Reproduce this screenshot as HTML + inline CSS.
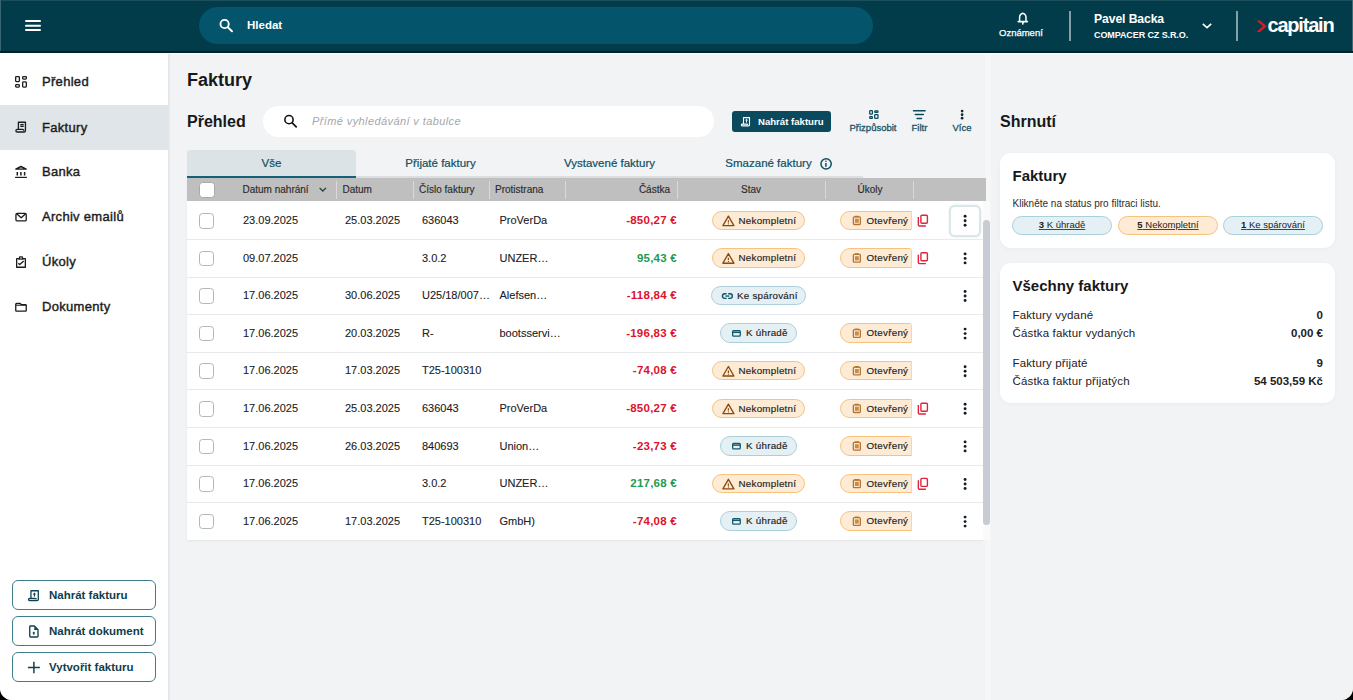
<!DOCTYPE html>
<html lang="cs">
<head>
<meta charset="utf-8">
<title>Faktury</title>
<style>
*{box-sizing:border-box;margin:0;padding:0}
html,body{width:1353px;height:700px;overflow:hidden;background:#000}
body{font-family:"Liberation Sans",sans-serif;color:#1b1c1e;position:relative}
.app{position:absolute;left:0;top:0;width:1353px;height:700px;background:#f2f3f5;border-radius:0 0 12px 12px;overflow:hidden}
.abs{position:absolute}
/* header */
.hdr{position:absolute;z-index:2;left:0;top:0;width:1353px;height:53px;background:#023c4b;border-bottom:2px solid #01202a}
.wstrip{position:absolute;z-index:2;left:0;top:53px;width:1353px;height:1.4px;background:#fff}
.hdr .topline{position:absolute;left:0;top:0;width:1353px;height:1px;background:#1d4e5c}
.ham{position:absolute;left:25px;width:16px;height:2px;background:#fff;border-radius:1px}
.gsearch{position:absolute;left:199px;top:7px;width:674px;height:37px;border-radius:19px;background:#04556b}
.gsearch .txt{position:absolute;left:48px;top:11px;font-size:11.5px;font-weight:bold;color:#fff;line-height:14px}
.notif{position:absolute;left:999px;top:27.5px;font-size:9.5px;color:#fff;line-height:10px;-webkit-text-stroke:0.25px #fff}
.vdiv{position:absolute;top:10.5px;width:2px;height:30px;background:#84a0a7}
.uname{position:absolute;left:1094px;top:12px;font-size:12.2px;font-weight:bold;color:#fff;line-height:15px;letter-spacing:-0.1px}
.ucomp{position:absolute;left:1094px;top:29.7px;font-size:9px;font-weight:bold;color:#fff;line-height:11px;letter-spacing:-0.1px}
.logo{position:absolute;left:1267.5px;top:13px;font-size:20px;font-weight:bold;color:#fff;letter-spacing:-1.2px;line-height:24px}
/* sidebar */
.side{position:absolute;left:0;top:52px;width:170px;height:648px;background:#fff;border-right:2px solid #e6e7ea}
.nav{position:absolute;left:0;width:168px;height:45px}
.nav.active{background:#dfe5e8}
.nav .ic{position:absolute;left:14px;top:16px;width:14px;height:14px}
.nav .lb{position:absolute;left:42px;top:15px;font-size:13px;line-height:15px;color:#1b1c1e;-webkit-text-stroke:0.4px #1b1c1e;letter-spacing:0.3px}
.sbtn{position:absolute;left:12px;width:144px;height:30px;border:1.5px solid #3f7d8c;border-radius:6px;background:#fff}
.sbtn .ic{position:absolute;left:15px;top:7px}
.sbtn .lb{position:absolute;left:36px;top:7px;font-size:11.5px;font-weight:bold;color:#0f3e4c;line-height:14px}
/* main */
.h1{position:absolute;left:187px;top:70px;font-size:18px;font-weight:bold;line-height:20px;color:#17181a}
.h2{position:absolute;left:187px;top:113px;font-size:16px;font-weight:bold;line-height:18px;color:#17181a}
.tsearch{position:absolute;left:263px;top:106px;width:451px;height:31px;border-radius:16px;background:#fff}
.tsearch .ph{position:absolute;left:49px;top:9px;font-size:11px;font-style:italic;color:#a4a7ab;line-height:13px;letter-spacing:0.4px}
.upbtn{position:absolute;left:732px;top:111px;width:99px;height:21px;border-radius:3px;background:#0b4a5c}
.upbtn .lb{position:absolute;left:26px;top:5px;font-size:9.6px;font-weight:bold;color:#fff;line-height:12px}
.tool{position:absolute;top:122px;font-size:9.5px;color:#165565;line-height:11px;-webkit-text-stroke:0.3px #165565}
.tab{position:absolute;top:150px;width:169px;height:28px;text-align:center;font-size:11.5px;line-height:13px;color:#0e5063;padding-top:7px;-webkit-text-stroke:0.2px #0e5063}
.tab.active{background:#dce3e6;border-radius:4px 4px 0 0;border-bottom:2px solid #16607a}
.tabline{position:absolute;left:187px;top:176px;width:676px;height:2px;background:#dcdfe2}
.table{position:absolute;left:187px;top:178px;width:796px;height:361.5px;background:#fff;box-shadow:0 1px 2px rgba(0,0,0,0.06)}
.thead{position:absolute;left:187px;top:178px;width:799px;height:23px;background:#bfbfbf}
.track{position:absolute;left:983px;top:201px;width:7px;height:338.5px;background:#fafafb}
.th{position:absolute;top:184px;font-size:10px;line-height:12px;color:#2a2b2d;-webkit-text-stroke:0.15px #2a2b2d}
.thd{position:absolute;top:181px;width:1px;height:18px;background:#d9d9d9}
.row{position:absolute;left:0;width:983px;height:37.6px}
.row.sep::after{content:"";position:absolute;left:187px;right:0;top:38px;height:1px;background:#e8eaec}
.row .t{position:absolute;top:13px;font-size:11px;line-height:13px;color:#202124;-webkit-text-stroke:0.1px #202124}
.cb{position:absolute;top:12px;width:15.5px;height:15.5px;border:1.5px solid #abb8bc;border-radius:3.5px;background:#fff}
.amt{position:absolute;right:306px;top:13px;font-size:11.5px;font-weight:bold;line-height:13px;letter-spacing:0.25px}
.amt.red{color:#e1112b}
.amt.green{color:#1f9a4e}
.pill{position:absolute;top:9.5px;height:19.5px;border-radius:10px;border:1px solid}
.pt{position:absolute;top:13.5px;font-size:9.8px;letter-spacing:0.25px;line-height:12px;color:#222;white-space:nowrap;-webkit-text-stroke:0.15px #222}
.pill.orange{background:#fdebd5;border-color:#f6c37f}
.pill.blue{background:#e5f0f4;border-color:#aad0dc}
.ukclip{position:absolute;left:838px;top:9px;width:74px;height:21px;overflow:hidden;border-radius:0 3px 3px 0}
.ukclip::after{content:"";position:absolute;right:0;top:1px;bottom:1px;width:1px;background:#f7d6ad}
.pill.uk{left:2px;top:0.5px;width:90px}
.copy{position:absolute;left:917px;top:12px;width:13px;height:15px}
.kebbtn{position:absolute;left:949px;top:3.5px;width:32px;height:32.5px;border:2px solid #d9e7e9;border-radius:6px;background:#fff;box-shadow:0 0 1.5px rgba(140,170,175,0.45)}
.keb{position:absolute;left:963.5px;top:13px;width:3px;height:12px}
.keb i{display:block;width:3px;height:3px;border-radius:50%;background:#0e1e26;margin-bottom:1.5px}
.sbar{position:absolute;left:983px;top:219.5px;width:6.5px;height:305px;border-radius:3.5px;background:#c8cbd3}
/* right panel */
.rpanel{position:absolute;left:991px;top:54px;width:362px;height:646px;background:#f2f3f5}
.rstrip{position:absolute;left:985px;top:54px;width:6px;height:646px;background:#f5f6f7}
.rh{position:absolute;left:1000px;top:113px;font-size:16px;font-weight:bold;line-height:18px;color:#17181a}
.card{position:absolute;left:1000px;width:335px;background:#fff;border-radius:11px;box-shadow:0 1px 4px rgba(0,0,0,0.04)}
.ct{position:absolute;left:12.5px;font-size:15px;font-weight:bold;line-height:17px;color:#17181a}
.cs{position:absolute;left:12.5px;top:45px;font-size:10px;line-height:12px;color:#2b2c2e}
.spill{position:absolute;top:62.5px;width:100px;height:19.5px;border-radius:10px;border:1px solid;text-align:center;font-size:9.5px;line-height:16px;color:#222}
.spill u{text-underline-offset:1px;text-decoration-color:#444;text-decoration-thickness:1px}
.kv{position:absolute;left:12.5px;font-size:11.5px;line-height:13px;color:#1f2022;letter-spacing:0.15px}
.kvv{position:absolute;right:12px;font-size:11.5px;font-weight:bold;line-height:13px;color:#1f2022}
</style>
</head>
<body>
<div class="app">
  <!-- header -->
  <div class="hdr">
    <div class="topline"></div>
    <div style="position:absolute;left:0;top:0;width:1px;height:51px;background:#3a6470"></div>
    <div style="position:absolute;left:1352px;top:0;width:1px;height:51px;background:#3f6a75"></div>
    <div class="gsearch">
      
      <div class="txt">Hledat</div>
    </div>
    
    <div class="notif">Oznámení</div>
    <div class="vdiv" style="left:1069px"></div>
    <div class="uname">Pavel Backa</div>
    <div class="ucomp">COMPACER CZ S.R.O.</div>
    
    <div class="vdiv" style="left:1236px"></div>
    
    <div class="logo">capitain</div>
  </div>

  <!-- sidebar -->
  <div class="side">
    <div class="nav" style="top:7px">
      
      <div class="lb">Přehled</div>
    </div>
    <div class="nav active" style="top:52.5px">
      
      <div class="lb">Faktury</div>
    </div>
    <div class="nav" style="top:97px">
      
      <div class="lb">Banka</div>
    </div>
    <div class="nav" style="top:142px">
      
      <div class="lb">Archiv emailů</div>
    </div>
    <div class="nav" style="top:187px">
      
      <div class="lb">Úkoly</div>
    </div>
    <div class="nav" style="top:232px">
      
      <div class="lb">Dokumenty</div>
    </div>

    <div class="sbtn" style="top:528px">
      
      <div class="lb">Nahrát fakturu</div>
    </div>
    <div class="sbtn" style="top:564px">
      
      <div class="lb">Nahrát dokument</div>
    </div>
    <div class="sbtn" style="top:600px">
      
      <div class="lb">Vytvořit fakturu</div>
    </div>
  </div>

  <!-- main -->
  <div class="h1">Faktury</div>
  <div class="h2">Přehled</div>
  <div class="tsearch">
    
    <div class="ph">Přímé vyhledávání v tabulce</div>
  </div>
  <div class="upbtn">
    
    <div class="lb">Nahrát fakturu</div>
  </div>
  
  <div class="tool" style="left:849.5px">Přizpůsobit</div>
  
  <div class="tool" style="left:911.5px">Filtr</div>
  
  <div class="tool" style="left:952.5px">Více</div>

  <div class="tabline"></div>
  <div class="tab active" style="left:187px">Vše</div>
  <div class="tab" style="left:356px">Přijaté faktury</div>
  <div class="tab" style="left:525px">Vystavené faktury</div>
  <div class="tab" style="left:694px;padding-right:20px">Smazané faktury</div>
  

  <div class="rstrip"></div>
  <div class="table"></div>
  <div class="thead"></div>
  <div class="cb" style="left:199px;top:182px;border-color:#a9a9a9"></div>
  <div class="th" style="left:242.5px">Datum nahrání</div>
  
  <div class="thd" style="left:336px"></div>
  <div class="th" style="left:342.5px">Datum</div>
  <div class="thd" style="left:412.5px"></div>
  <div class="th" style="left:419px">Číslo faktury</div>
  <div class="thd" style="left:488.5px"></div>
  <div class="th" style="left:495px">Protistrana</div>
  <div class="thd" style="left:565px"></div>
  <div class="th" style="left:565px;width:105px;text-align:right">Částka</div>
  <div class="thd" style="left:676.5px"></div>
  <div class="th" style="left:677px;width:148px;text-align:center">Stav</div>
  <div class="thd" style="left:824.5px"></div>
  <div class="th" style="left:825px;width:90px;text-align:center">Úkoly</div>
  <div class="thd" style="left:913px"></div>

<div class="row sep" style="top:201.00px"><div class="cb" style="left:198.5px"></div><div class="t" style="left:243px">23.09.2025</div><div class="t" style="left:345px">25.03.2025</div><div class="t" style="left:422px">636043</div><div class="t" style="left:499.5px">ProVerDa</div><div class="amt red">-850,27 €</div><div class="pill orange" style="left:712px;width:93px"></div><div class="pt" style="left:738.5px">Nekompletní</div><div class="ukclip"><div class="pill orange uk"></div></div><div class="pt" style="left:866.5px">Otevřený</div><div class="kebbtn"></div></div>
<div class="row sep" style="top:238.60px"><div class="cb" style="left:198.5px"></div><div class="t" style="left:243px">09.07.2025</div><div class="t" style="left:422px">3.0.2</div><div class="t" style="left:499.5px">UNZER…</div><div class="amt green">95,43 €</div><div class="pill orange" style="left:712px;width:93px"></div><div class="pt" style="left:738.5px">Nekompletní</div><div class="ukclip"><div class="pill orange uk"></div></div><div class="pt" style="left:866.5px">Otevřený</div></div>
<div class="row sep" style="top:276.20px"><div class="cb" style="left:198.5px"></div><div class="t" style="left:243px">17.06.2025</div><div class="t" style="left:345px">30.06.2025</div><div class="t" style="left:422px">U25/18/007…</div><div class="t" style="left:499.5px">Alefsen…</div><div class="amt red">-118,84 €</div><div class="pill blue" style="left:711px;width:95px"></div><div class="pt" style="left:737px">Ke spárování</div></div>
<div class="row sep" style="top:313.80px"><div class="cb" style="left:198.5px"></div><div class="t" style="left:243px">17.06.2025</div><div class="t" style="left:345px">20.03.2025</div><div class="t" style="left:422px">R-</div><div class="t" style="left:499.5px">bootsservi…</div><div class="amt red">-196,83 €</div><div class="pill blue" style="left:720px;width:77px"></div><div class="pt" style="left:746px">K úhradě</div><div class="ukclip"><div class="pill orange uk"></div></div><div class="pt" style="left:866.5px">Otevřený</div></div>
<div class="row sep" style="top:351.40px"><div class="cb" style="left:198.5px"></div><div class="t" style="left:243px">17.06.2025</div><div class="t" style="left:345px">17.03.2025</div><div class="t" style="left:422px">T25-100310</div><div class="amt red">-74,08 €</div><div class="pill orange" style="left:712px;width:93px"></div><div class="pt" style="left:738.5px">Nekompletní</div><div class="ukclip"><div class="pill orange uk"></div></div><div class="pt" style="left:866.5px">Otevřený</div></div>
<div class="row sep" style="top:389.00px"><div class="cb" style="left:198.5px"></div><div class="t" style="left:243px">17.06.2025</div><div class="t" style="left:345px">25.03.2025</div><div class="t" style="left:422px">636043</div><div class="t" style="left:499.5px">ProVerDa</div><div class="amt red">-850,27 €</div><div class="pill orange" style="left:712px;width:93px"></div><div class="pt" style="left:738.5px">Nekompletní</div><div class="ukclip"><div class="pill orange uk"></div></div><div class="pt" style="left:866.5px">Otevřený</div></div>
<div class="row sep" style="top:426.60px"><div class="cb" style="left:198.5px"></div><div class="t" style="left:243px">17.06.2025</div><div class="t" style="left:345px">26.03.2025</div><div class="t" style="left:422px">840693</div><div class="t" style="left:499.5px">Union…</div><div class="amt red">-23,73 €</div><div class="pill blue" style="left:720px;width:77px"></div><div class="pt" style="left:746px">K úhradě</div><div class="ukclip"><div class="pill orange uk"></div></div><div class="pt" style="left:866.5px">Otevřený</div></div>
<div class="row sep" style="top:464.20px"><div class="cb" style="left:198.5px"></div><div class="t" style="left:243px">17.06.2025</div><div class="t" style="left:422px">3.0.2</div><div class="t" style="left:499.5px">UNZER…</div><div class="amt green">217,68 €</div><div class="pill orange" style="left:712px;width:93px"></div><div class="pt" style="left:738.5px">Nekompletní</div><div class="ukclip"><div class="pill orange uk"></div></div><div class="pt" style="left:866.5px">Otevřený</div></div>
<div class="row" style="top:501.80px"><div class="cb" style="left:198.5px"></div><div class="t" style="left:243px">17.06.2025</div><div class="t" style="left:345px">17.03.2025</div><div class="t" style="left:422px">T25-100310</div><div class="t" style="left:499.5px">GmbH)</div><div class="amt red">-74,08 €</div><div class="pill blue" style="left:720px;width:77px"></div><div class="pt" style="left:746px">K úhradě</div><div class="ukclip"><div class="pill orange uk"></div></div><div class="pt" style="left:866.5px">Otevřený</div></div>

  <div class="track"></div>
  <div class="sbar"></div>

  <!-- right panel -->
  <div class="rpanel"></div>
  <div class="wstrip"></div>
  <div class="rh">Shrnutí</div>
  <div class="card" style="top:153px;height:95px">
    <div class="ct" style="top:14px">Faktury</div>
    <div class="cs">Klikněte na status pro filtraci listu.</div>
    <div class="spill" style="left:12px;background:#e5f0f4;border-color:#aad0dc"><u><b>3</b> K úhradě</u></div>
    <div class="spill" style="left:118px;background:#fdebd5;border-color:#f6c37f"><u><b>5</b> Nekompletní</u></div>
    <div class="spill" style="left:223px;background:#e5f0f4;border-color:#aad0dc"><u><b>1</b> Ke spárování</u></div>
  </div>
  <div class="card" style="top:263px;height:139.5px">
    <div class="ct" style="top:14px">Všechny faktury</div>
    <div class="kv" style="top:46px">Faktury vydané</div>
    <div class="kvv" style="top:46px">0</div>
    <div class="kv" style="top:64px">Částka faktur vydaných</div>
    <div class="kvv" style="top:64px">0,00 €</div>
    <div class="kv" style="top:94px">Faktury přijaté</div>
    <div class="kvv" style="top:94px">9</div>
    <div class="kv" style="top:112px">Částka faktur přijatých</div>
    <div class="kvv" style="top:112px">54 503,59 Kč</div>
  </div>
<svg style="position:absolute;left:0;top:0;z-index:5" width="1353" height="700" viewBox="0 0 1353 700">
<rect x="25" y="20.10" width="16" height="2" rx="1" fill="#fff"/>
<rect x="25" y="24.65" width="16" height="2" rx="1" fill="#fff"/>
<rect x="25" y="29.00" width="16" height="2" rx="1" fill="#fff"/>
<circle cx="224.6" cy="24" r="4.15" fill="none" stroke="#fff" stroke-width="1.9"/><path d="M227.8 27.3L232 31.3" stroke="#fff" stroke-width="1.9" stroke-linecap="round"/>
<path d="M1019.6 21.2V17.6c0-2.4 1.4-4 3.2-4.4c1.8.4 3.2 2 3.2 4.4v3.6" fill="none" stroke="#fff" stroke-width="1.5" stroke-linejoin="round"/><path d="M1018.2 21.6H1027.4" stroke="#fff" stroke-width="1.6" stroke-linecap="round"/><path d="M1022.8 22.2v1.8" stroke="#fff" stroke-width="1.6" stroke-linecap="round"/>
<path d="M1202.8 23.8L1207 27.7L1211.2 23.8" fill="none" stroke="#fff" stroke-width="1.6"/>
<path d="M1256.5 20.5 L1260.1 20.5 L1266.7 26.2 L1260.1 31.9 L1256.5 31.9 L1262.9 26.2 Z" fill="#e8141f"/>
<g fill="none" stroke="#1b1c1e" stroke-width="1.3"><rect x="15.65" y="76.55" width="3.7" height="5.05" rx="0.8"/><rect x="22.65" y="76.55" width="3.7" height="2.5" rx="0.8"/><rect x="15.65" y="84.65" width="3.7" height="2.4" rx="0.8"/><rect x="22.65" y="81.9" width="3.7" height="5.15" rx="0.8"/></g>
<g fill="none" stroke="#1b1c1e" stroke-width="1.3" stroke-linejoin="round"><path d="M18.4 129.4V122.25H25.45V130.7a1.3 1.3 0 0 1-1.3 1.3H17.2a1.3 1.3 0 0 1 0-2.6h5.3a1.3 1.3 0 0 1 1.3 1.3"/><path d="M20.3 124.6h3.4M20.3 126.3h3.4" stroke-width="1.2"/></g>
<g fill="none" stroke="#1b1c1e"><path d="M15.8 169.1L21 166.5L26.2 169.1Z" stroke-width="1.4" stroke-linejoin="round" fill="#1b1c1e" fill-opacity="0.15"/><path d="M17.3 172v3.4M20.9 172v3.4M24.6 172v3.4" stroke-width="1.5"/><path d="M15.1 177.4h11.8" stroke-width="1.2"/></g>
<g fill="none" stroke="#1b1c1e" stroke-width="1.3"><rect x="15.95" y="213.45" width="10.3" height="7.5" rx="1.2"/><path d="M16.6 213.8L21.25 217.8L25.6 213.8" stroke-linejoin="round"/></g>
<g fill="none" stroke="#1b1c1e" stroke-width="1.3" stroke-linejoin="round"><path d="M19 258.65H16.65V267.25H25.35V258.65H23"/><path d="M19 259.2L19.8 256.8H22.2L23 259.2Z"/><path d="M18.3 263.3L19.7 264.6L23.7 261.1"/></g>
<g fill="none" stroke="#1b1c1e" stroke-width="1.3" stroke-linejoin="round"><path d="M15.75 310.4V304.2a.8.8 0 0 1 .8-.8H20.2L21.4 304.7H25.45a.8.8 0 0 1 .8.8V310.4a.8.8 0 0 1-.8.8H16.55a.8.8 0 0 1-.8-.8Z"/><path d="M15.8 305.2H26.2" stroke-width="1.1"/></g>
<g fill="none" stroke="#0f4250" stroke-width="1.3" stroke-linejoin="round"><path d="M30.95 598.6V590.75H38.3V599.6a1.1 1.1 0 0 1-1.1 1.1H29.6a1.1 1.1 0 0 1 0-2.2h5.6a1.1 1.1 0 0 1 1.1 1.1"/></g><path d="M34.4 592.4L36.1 594.4H32.7Z" fill="#0f4250"/><path d="M34.4 594v2.6" stroke="#0f4250" stroke-width="1.2"/>
<g fill="none" stroke="#0f4250" stroke-width="1.35" stroke-linejoin="round"><path d="M29.75 626.75a.8.8 0 0 1 .8-.8H34.4L38 629.6V636.2a.8.8 0 0 1-.8.8H30.55a.8.8 0 0 1-.8-.8Z"/></g><path d="M34.3 626.2V629.9H37.9Z" fill="#0f4250"/><path d="M33.8 631.6L35.4 633.3H32.2Z" fill="#0f4250"/><path d="M33.8 633v1.8" stroke="#0f4250" stroke-width="1.3"/>
<path d="M33.9 661.7V673.3M27.9 667.6H39.9" stroke="#0f4250" stroke-width="1.5"/>
<circle cx="289" cy="119.65" r="4.1" fill="none" stroke="#111" stroke-width="1.6"/><path d="M292.2 122.9L296.2 126.8" stroke="#111" stroke-width="1.7" stroke-linecap="round"/>
<g fill="none" stroke="#fff" stroke-width="1.1" stroke-linejoin="round"><path d="M743.5 124V117.6H749.5V125a.9.9 0 0 1-.9.9H742.2a.9.9 0 0 1 0-1.8h4.6a.9.9 0 0 1 .9.9"/></g><path d="M746.5 118.8L748 120.6H745Z" fill="#fff"/><path d="M746.5 120.3v2.2" stroke="#fff" stroke-width="1"/>
<g fill="none" stroke="#0d4b5a" stroke-width="1.25"><rect x="869.7" y="110.7" width="2.7" height="3.4" rx="0.6"/><rect x="874.7" y="110.9" width="3.3" height="1.4" rx="0.6"/><rect x="869.7" y="116.7" width="2.7" height="1.6" rx="0.6"/><rect x="874.7" y="114.7" width="3.3" height="3.6" rx="0.6"/></g>
<path d="M913.5 110.65H925.1M915.3 114.6H923.3M917.1 118.4H921.5" stroke="#0d4b5a" stroke-width="1.5" stroke-linecap="round"/>
<circle cx="962.1" cy="111.1" r="1.35" fill="#0c2a33"/><circle cx="962.1" cy="114.65" r="1.35" fill="#0c2a33"/><circle cx="962.1" cy="118.2" r="1.35" fill="#0c2a33"/>
<circle cx="826.1" cy="163.8" r="5.15" fill="none" stroke="#0e5063" stroke-width="1.5"/><path d="M825.9 163v3.8" stroke="#0e5063" stroke-width="1.5"/><circle cx="825.9" cy="161.2" r="0.8" fill="#0e5063"/>
<path d="M319.6 187.9L322.8 191L326 187.9" fill="none" stroke="#233c44" stroke-width="1.3"/>
<path d="M728.4 216.10L733.9 225.60H722.9Z" fill="none" stroke="#8b4a10" stroke-width="1.35" stroke-linejoin="round"/><path d="M728.4 220.20v2.3" stroke="#8b4a10" stroke-width="1.2"/><circle cx="728.4" cy="223.80" r="0.65" fill="#8b4a10"/>
<rect x="853.35" y="216.80" width="7" height="7.7" rx="0.9" fill="none" stroke="#b7742c" stroke-width="1.3"/><rect x="854.9" y="218.60" width="3.9" height="4.2" fill="#c98b4c"/><path d="M855.4 216.50h2.9" stroke="#b7742c" stroke-width="1.6" stroke-linecap="round"/>
<rect x="920.9" y="215.20" width="6.5" height="8" rx="1" fill="none" stroke="#e0243c" stroke-width="1.4"/><path d="M918.35 217.10V225.00a1 1 0 0 0 1 1H925.9" fill="none" stroke="#e0243c" stroke-width="1.4"/>
<circle cx="965.1" cy="216.30" r="1.45" fill="#0e1e26"/><circle cx="965.1" cy="220.80" r="1.45" fill="#0e1e26"/><circle cx="965.1" cy="225.30" r="1.45" fill="#0e1e26"/>
<path d="M728.4 253.70L733.9 263.20H722.9Z" fill="none" stroke="#8b4a10" stroke-width="1.35" stroke-linejoin="round"/><path d="M728.4 257.80v2.3" stroke="#8b4a10" stroke-width="1.2"/><circle cx="728.4" cy="261.40" r="0.65" fill="#8b4a10"/>
<rect x="853.35" y="254.40" width="7" height="7.7" rx="0.9" fill="none" stroke="#b7742c" stroke-width="1.3"/><rect x="854.9" y="256.20" width="3.9" height="4.2" fill="#c98b4c"/><path d="M855.4 254.10h2.9" stroke="#b7742c" stroke-width="1.6" stroke-linecap="round"/>
<rect x="920.9" y="252.80" width="6.5" height="8" rx="1" fill="none" stroke="#e0243c" stroke-width="1.4"/><path d="M918.35 254.70V262.60a1 1 0 0 0 1 1H925.9" fill="none" stroke="#e0243c" stroke-width="1.4"/>
<circle cx="965.1" cy="253.90" r="1.45" fill="#0e1e26"/><circle cx="965.1" cy="258.40" r="1.45" fill="#0e1e26"/><circle cx="965.1" cy="262.90" r="1.45" fill="#0e1e26"/>
<g fill="none" stroke="#0b5566" stroke-width="1.4"><path d="M726.6 293.70H724.8a2.35 2.35 0 0 0 0 4.7H726.6M728.2 293.70H730a2.35 2.35 0 0 1 0 4.7H728.2"/><path d="M725.4 296.05H729.4" stroke-width="1.3"/></g>
<circle cx="965.1" cy="291.50" r="1.45" fill="#0e1e26"/><circle cx="965.1" cy="296.00" r="1.45" fill="#0e1e26"/><circle cx="965.1" cy="300.50" r="1.45" fill="#0e1e26"/>
<g fill="none" stroke="#14596b" stroke-width="1.3"><rect x="732.65" y="330.55" width="7.6" height="5.5" rx="0.9"/><path d="M732.6 332.30H740.3" stroke-width="1.5"/></g>
<rect x="853.35" y="329.60" width="7" height="7.7" rx="0.9" fill="none" stroke="#b7742c" stroke-width="1.3"/><rect x="854.9" y="331.40" width="3.9" height="4.2" fill="#c98b4c"/><path d="M855.4 329.30h2.9" stroke="#b7742c" stroke-width="1.6" stroke-linecap="round"/>
<circle cx="965.1" cy="329.10" r="1.45" fill="#0e1e26"/><circle cx="965.1" cy="333.60" r="1.45" fill="#0e1e26"/><circle cx="965.1" cy="338.10" r="1.45" fill="#0e1e26"/>
<path d="M728.4 366.50L733.9 376.00H722.9Z" fill="none" stroke="#8b4a10" stroke-width="1.35" stroke-linejoin="round"/><path d="M728.4 370.60v2.3" stroke="#8b4a10" stroke-width="1.2"/><circle cx="728.4" cy="374.20" r="0.65" fill="#8b4a10"/>
<rect x="853.35" y="367.20" width="7" height="7.7" rx="0.9" fill="none" stroke="#b7742c" stroke-width="1.3"/><rect x="854.9" y="369.00" width="3.9" height="4.2" fill="#c98b4c"/><path d="M855.4 366.90h2.9" stroke="#b7742c" stroke-width="1.6" stroke-linecap="round"/>
<circle cx="965.1" cy="366.70" r="1.45" fill="#0e1e26"/><circle cx="965.1" cy="371.20" r="1.45" fill="#0e1e26"/><circle cx="965.1" cy="375.70" r="1.45" fill="#0e1e26"/>
<path d="M728.4 404.10L733.9 413.60H722.9Z" fill="none" stroke="#8b4a10" stroke-width="1.35" stroke-linejoin="round"/><path d="M728.4 408.20v2.3" stroke="#8b4a10" stroke-width="1.2"/><circle cx="728.4" cy="411.80" r="0.65" fill="#8b4a10"/>
<rect x="853.35" y="404.80" width="7" height="7.7" rx="0.9" fill="none" stroke="#b7742c" stroke-width="1.3"/><rect x="854.9" y="406.60" width="3.9" height="4.2" fill="#c98b4c"/><path d="M855.4 404.50h2.9" stroke="#b7742c" stroke-width="1.6" stroke-linecap="round"/>
<rect x="920.9" y="403.20" width="6.5" height="8" rx="1" fill="none" stroke="#e0243c" stroke-width="1.4"/><path d="M918.35 405.10V413.00a1 1 0 0 0 1 1H925.9" fill="none" stroke="#e0243c" stroke-width="1.4"/>
<circle cx="965.1" cy="404.30" r="1.45" fill="#0e1e26"/><circle cx="965.1" cy="408.80" r="1.45" fill="#0e1e26"/><circle cx="965.1" cy="413.30" r="1.45" fill="#0e1e26"/>
<g fill="none" stroke="#14596b" stroke-width="1.3"><rect x="732.65" y="443.35" width="7.6" height="5.5" rx="0.9"/><path d="M732.6 445.10H740.3" stroke-width="1.5"/></g>
<rect x="853.35" y="442.40" width="7" height="7.7" rx="0.9" fill="none" stroke="#b7742c" stroke-width="1.3"/><rect x="854.9" y="444.20" width="3.9" height="4.2" fill="#c98b4c"/><path d="M855.4 442.10h2.9" stroke="#b7742c" stroke-width="1.6" stroke-linecap="round"/>
<circle cx="965.1" cy="441.90" r="1.45" fill="#0e1e26"/><circle cx="965.1" cy="446.40" r="1.45" fill="#0e1e26"/><circle cx="965.1" cy="450.90" r="1.45" fill="#0e1e26"/>
<path d="M728.4 479.30L733.9 488.80H722.9Z" fill="none" stroke="#8b4a10" stroke-width="1.35" stroke-linejoin="round"/><path d="M728.4 483.40v2.3" stroke="#8b4a10" stroke-width="1.2"/><circle cx="728.4" cy="487.00" r="0.65" fill="#8b4a10"/>
<rect x="853.35" y="480.00" width="7" height="7.7" rx="0.9" fill="none" stroke="#b7742c" stroke-width="1.3"/><rect x="854.9" y="481.80" width="3.9" height="4.2" fill="#c98b4c"/><path d="M855.4 479.70h2.9" stroke="#b7742c" stroke-width="1.6" stroke-linecap="round"/>
<rect x="920.9" y="478.40" width="6.5" height="8" rx="1" fill="none" stroke="#e0243c" stroke-width="1.4"/><path d="M918.35 480.30V488.20a1 1 0 0 0 1 1H925.9" fill="none" stroke="#e0243c" stroke-width="1.4"/>
<circle cx="965.1" cy="479.50" r="1.45" fill="#0e1e26"/><circle cx="965.1" cy="484.00" r="1.45" fill="#0e1e26"/><circle cx="965.1" cy="488.50" r="1.45" fill="#0e1e26"/>
<g fill="none" stroke="#14596b" stroke-width="1.3"><rect x="732.65" y="518.55" width="7.6" height="5.5" rx="0.9"/><path d="M732.6 520.30H740.3" stroke-width="1.5"/></g>
<rect x="853.35" y="517.60" width="7" height="7.7" rx="0.9" fill="none" stroke="#b7742c" stroke-width="1.3"/><rect x="854.9" y="519.40" width="3.9" height="4.2" fill="#c98b4c"/><path d="M855.4 517.30h2.9" stroke="#b7742c" stroke-width="1.6" stroke-linecap="round"/>
<circle cx="965.1" cy="517.10" r="1.45" fill="#0e1e26"/><circle cx="965.1" cy="521.60" r="1.45" fill="#0e1e26"/><circle cx="965.1" cy="526.10" r="1.45" fill="#0e1e26"/>
</svg>
</div>
</body>
</html>
